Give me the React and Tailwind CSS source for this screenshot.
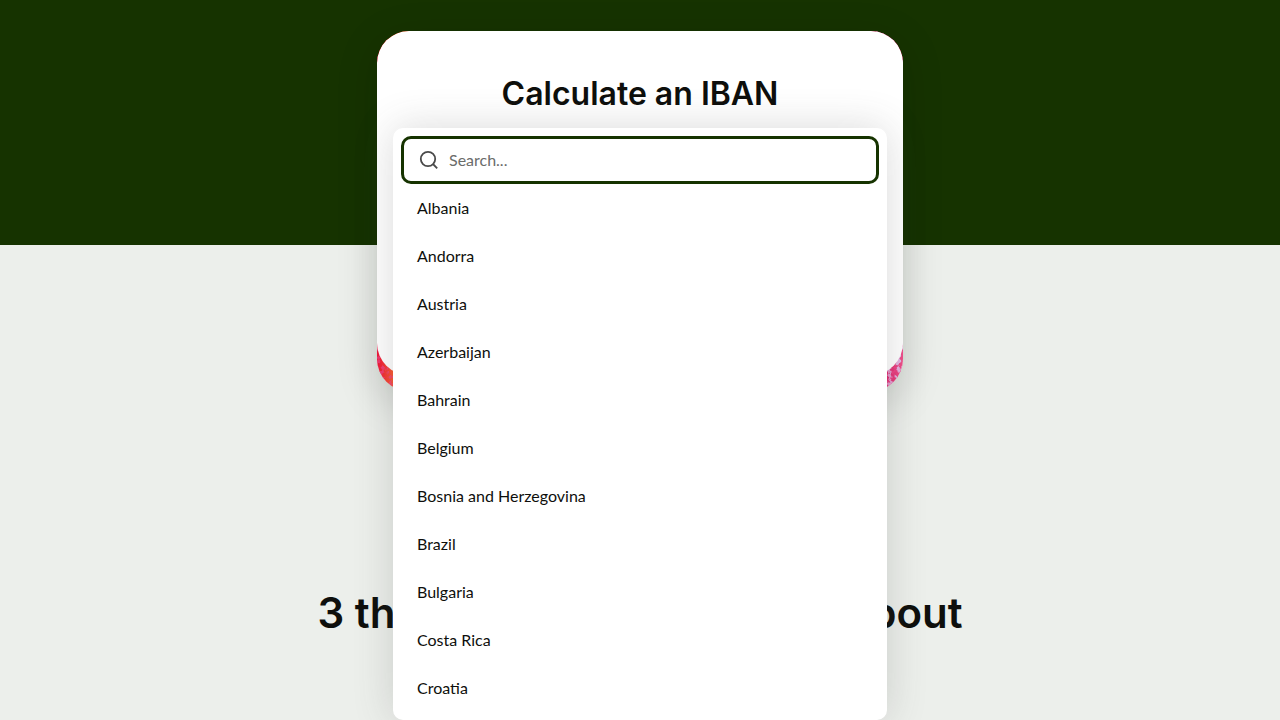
const countries = [
  'Albania',
  'Andorra',
  'Austria',
  'Azerbaijan',
  'Bahrain',
  'Belgium',
  'Bosnia and Herzegovina',
  'Brazil',
  'Bulgaria',
  'Costa Rica',
  'Croatia',
];

function SearchIcon() {
  return (
    <svg className="size-6 shrink-0 text-[#4a4a4a]" viewBox="0 0 24 24" fill="none" stroke="currentColor" strokeWidth="1.8" aria-hidden="true">
      <circle cx="11" cy="11" r="7.2" />
      <path d="M16 16l4.2 4.3" />
    </svg>
  );
}

function Tapestry() {
  return (
    <svg className="absolute inset-0 h-full w-full" preserveAspectRatio="none" aria-hidden="true">
      <defs>
        <linearGradient id="tapestry">
          <stop offset="0" stopColor="#ee1438" />
          <stop offset="0.03" stopColor="#fb5a30" />
          <stop offset="0.5" stopColor="#ff8a3c" />
          <stop offset="0.97" stopColor="#e0286f" />
          <stop offset="1" stopColor="#f0508a" />
        </linearGradient>
        <filter id="weave" x="0" y="0" width="100%" height="100%">
          <feTurbulence type="fractalNoise" baseFrequency="0.2" numOctaves="3" seed="4" />
          <feColorMatrix values="0 0 0 0 0.75  0 0 0 0 0.5  0 0 0 0 0.8  7 0 0 0 -3.4" />
        </filter>
        <filter id="threads" x="0" y="0" width="100%" height="100%">
          <feTurbulence type="fractalNoise" baseFrequency="0.25" numOctaves="2" seed="9" />
          <feColorMatrix values="0 0 0 0 0.87  0 0 0 0 0.06  0 0 0 0 0.25  6 0 0 0 -3" />
        </filter>
        <linearGradient id="fade">
          <stop offset="0" stopColor="#000" />
          <stop offset="0.9" stopColor="#222" />
          <stop offset="1" stopColor="#fff" />
        </linearGradient>
        <mask id="weaveMask">
          <rect width="100%" height="100%" fill="url(#fade)" />
        </mask>
      </defs>
      <rect width="100%" height="100%" fill="url(#tapestry)" />
      <rect width="100%" height="100%" filter="url(#threads)" opacity="0.7" />
      <g mask="url(#weaveMask)">
        <rect width="100%" height="100%" filter="url(#weave)" />
      </g>
    </svg>
  );
}

function CountryMenu() {
  return (
    <div className="absolute inset-x-4 top-[97px] z-10 rounded-[10px] bg-white p-2 shadow-[0_0_40px_rgba(69,71,69,0.2)]">
      <label className="flex h-12 items-center gap-2 rounded-[10px] border-3 border-[#163300] px-[13px]">
        <SearchIcon />
        <input
          type="search"
          aria-label="Search countries"
          placeholder="Search..."
          className="min-w-0 flex-1 bg-transparent text-base text-[#0e0f0c] outline-none placeholder:text-[#6a6c6a]"
        />
      </label>
      <ul role="listbox" aria-label="Countries">
        {countries.map((name) => (
          <li key={name} role="option" aria-selected="false" className="flex h-12 items-center px-4 text-base">
            {name}
          </li>
        ))}
      </ul>
    </div>
  );
}

export default function App() {
  return (
    <div className="min-h-screen overflow-x-clip bg-[#ecefeb] font-['Lato',sans-serif] text-[#0e0f0c]">
      <header className="h-[245px] bg-[#163300] px-4 pt-[31px]">
        <div className="relative mx-auto w-full max-w-[526px]">
          <div className="relative overflow-hidden rounded-[32px] pb-4 shadow-[0_10px_40px_rgba(14,15,12,0.17)]">
            <Tapestry />
            <div className="relative min-h-[344px] rounded-[32px] bg-white px-4 pt-10">
              <h1 className="text-center font-['Inter',sans-serif] text-[32px] leading-[46px] font-semibold">Calculate an IBAN</h1>
            </div>
          </div>
          <CountryMenu />
        </div>
      </header>
      <main className="px-4 pt-[341px]">
        <h2 className="text-center font-['Inter',sans-serif] text-[42px] leading-[54px] font-semibold">3 things you should know about</h2>
      </main>
    </div>
  );
}
